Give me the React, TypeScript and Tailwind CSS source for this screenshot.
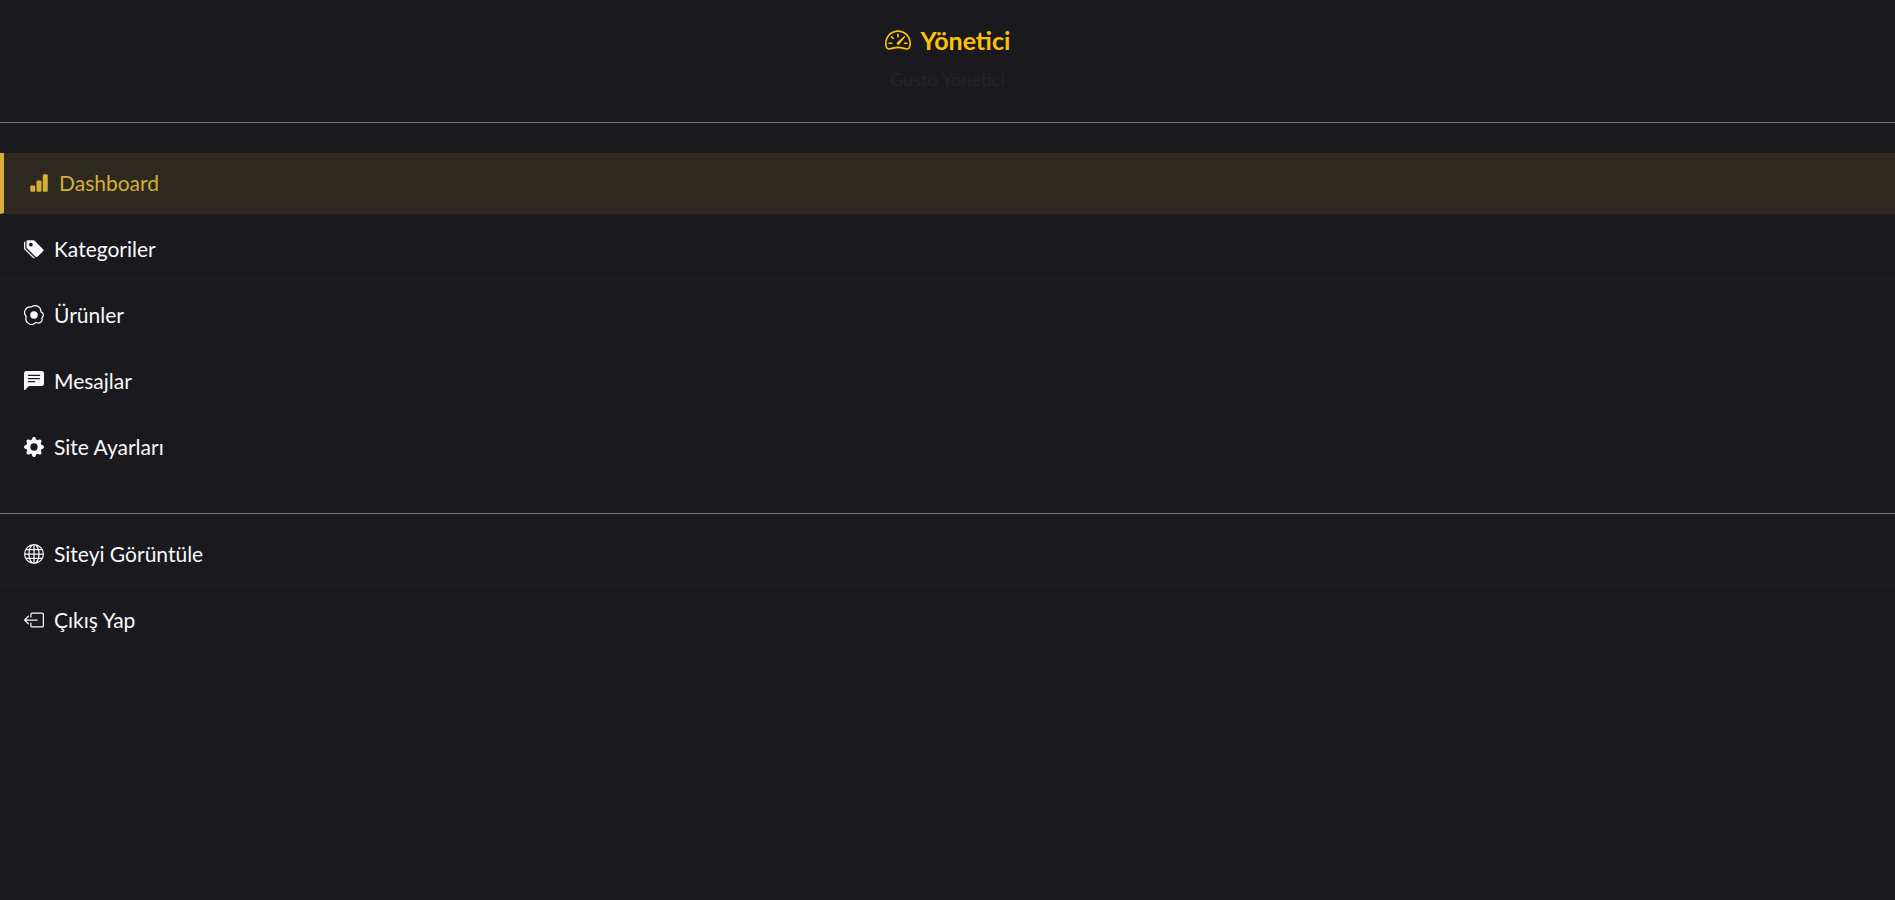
import {
  BsBarChartFill,
  BsBoxArrowLeft,
  BsChatLeftTextFill,
  BsEggFried,
  BsGearFill,
  BsGlobe,
  BsSpeedometer2,
  BsTagsFill,
} from 'react-icons/bs';
import type { IconType } from 'react-icons';

interface MenuItem {
  label: string;
  icon: IconType;
  active?: boolean;
}

const mainItems: MenuItem[] = [
  { label: 'Dashboard', icon: BsBarChartFill, active: true },
  { label: 'Kategoriler', icon: BsTagsFill },
  { label: 'Ürünler', icon: BsEggFried },
  { label: 'Mesajlar', icon: BsChatLeftTextFill },
  { label: 'Site Ayarları', icon: BsGearFill },
];

const footerItems: MenuItem[] = [
  { label: 'Siteyi Görüntüle', icon: BsGlobe },
  { label: 'Çıkış Yap', icon: BsBoxArrowLeft },
];

function MenuLink({ label, icon: Icon, active }: MenuItem) {
  return (
    <a
      href="#"
      aria-current={active ? 'page' : undefined}
      className={`mb-[5px] flex items-center gap-2.5 border-b border-b-white/2 py-[15px] pr-6 ${
        active
          ? 'border-l-4 border-l-[#d4af37] bg-[#d4af37]/10 pl-[25px] text-[#d4af37]'
          : 'pl-6 text-[#f8f9fa]'
      }`}
    >
      <Icon className="size-5 shrink-0" />
      <span>{label}</span>
    </a>
  );
}

export default function App() {
  return (
    <div className="min-h-screen bg-[#1a1a1e] font-['Lato','Noto_Sans',sans-serif] text-[21px] leading-[30px]">
      <header className="border-b border-[#6c757d] px-6 pt-6 pb-7 text-center">
        <h1 className="mb-2 flex items-center justify-center gap-2.5 text-[25px] leading-8 font-bold text-[#ffc107]">
          <BsSpeedometer2 className="size-[26px]" />
          Yönetici
        </h1>
        <p className="text-[18px] text-[#212529]">Gusto Yönetici</p>
      </header>
      <nav>
        <div className="pt-[30px] pb-[30px]">
          {mainItems.map((item) => (
            <MenuLink key={item.label} {...item} />
          ))}
        </div>
        <div className="border-t border-[#6c757d] pt-2.5">
          {footerItems.map((item) => (
            <MenuLink key={item.label} {...item} />
          ))}
        </div>
      </nav>
    </div>
  );
}
